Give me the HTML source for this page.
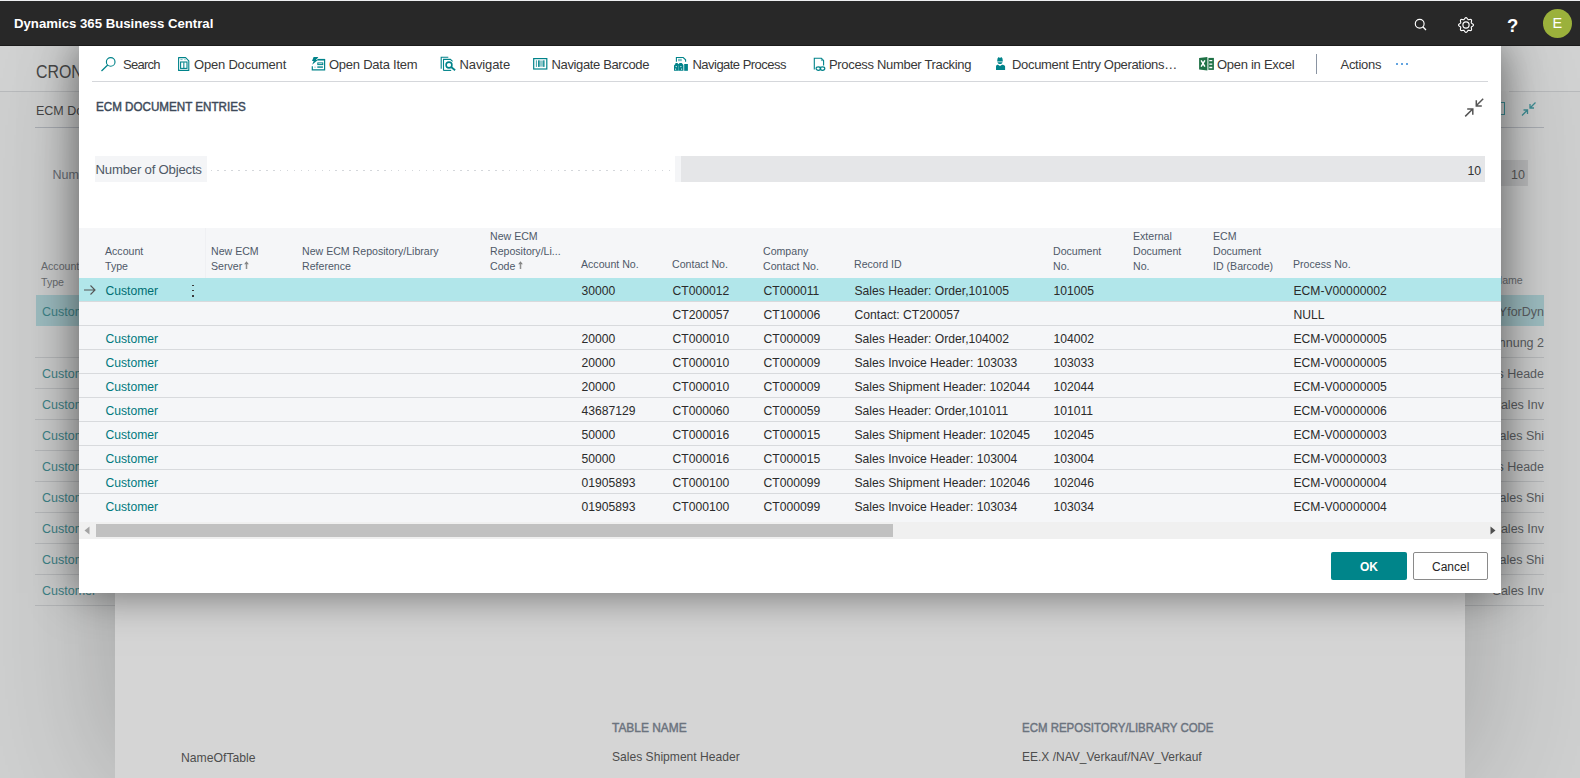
<!DOCTYPE html><html><head><meta charset="utf-8"><style>
*{margin:0;padding:0;box-sizing:border-box}
html,body{width:1580px;height:778px;overflow:hidden}
body{position:relative;background:#cfd0d0;font-family:"Liberation Sans",sans-serif}
.t{position:absolute;white-space:nowrap}
.abs{position:absolute}
</style></head><body>
<div class="abs" style="left:0;top:91px;width:80px;height:1px;background:#b9bbbd"></div>
<div class="abs" style="left:1509px;top:91px;width:71px;height:1px;background:#b9bbbd"></div>
<div class="abs" style="left:0;top:46px;width:1580px;height:45px;background:rgba(255,255,255,.07)"></div>
<div class="t" style="left:36px;top:58.95px;font-size:18.5px;line-height:25.27px;color:#484848;transform:scaleX(.86);transform-origin:0 0;">CRONUS</div>
<div class="t" style="left:36px;top:102.48px;font-size:12.5px;line-height:18.38px;color:#474747;">ECM Document Entries</div>
<div class="abs" style="left:35px;top:127px;width:1509px;height:1px;background:#a9adb3"></div>
<div class="t" style="left:52.5px;top:166.48px;font-size:12.5px;line-height:18.38px;color:#6a6f77;">Number of Objects</div>
<div class="abs" style="left:1400px;top:160px;width:128px;height:26px;background:#bdbebf"></div>
<div class="t" style="left:1511px;top:166.48px;font-size:12.5px;line-height:18.38px;color:#5a5a5a;">10</div>
<svg class="abs" style="left:1519px;top:100px" width="20" height="18" viewBox="0 0 20 18"><g stroke="#3f8f96" stroke-width="1.3" fill="none"><path d="M3 15.5 L8.5 10 M4.5 10 H8.5 V14"/><path d="M16.5 2.5 L11 8 M11 4 V8 H15"/></g></svg>
<div class="abs" style="left:1498px;top:102px;width:7px;height:13px;border:1.3px solid #3f8f96;border-left:none"></div>
<div class="t" style="left:41px;top:258.23px;font-size:10.6px;line-height:16.19px;color:#6b6e72;">Account</div>
<div class="t" style="left:41px;top:273.73px;font-size:10.6px;line-height:16.19px;color:#6b6e72;">Type</div>
<div class="t" style="left:1494.5px;top:272.23px;font-size:10.6px;line-height:16.19px;color:#6b6e72;">Name</div>
<div class="abs" style="left:36px;top:295px;width:60px;height:31px;background:#9fbfc3"></div>
<div class="abs" style="left:1460px;top:295px;width:84px;height:31px;background:#9fbfc3"></div>
<div class="t" style="left:42px;top:303.48px;font-size:12.5px;line-height:18.38px;color:#3e8489;">Customer</div>
<div class="abs" style="left:35px;top:357px;width:80px;height:1px;background:#b8babc"></div>
<div class="abs" style="left:1460px;top:357px;width:84px;height:1px;background:#b8babc"></div>
<div class="t" style="left:42px;top:365.48px;font-size:12.5px;line-height:18.38px;color:#3e8489;">Customer</div>
<div class="abs" style="left:35px;top:388px;width:80px;height:1px;background:#b8babc"></div>
<div class="abs" style="left:1460px;top:388px;width:84px;height:1px;background:#b8babc"></div>
<div class="t" style="left:42px;top:396.48px;font-size:12.5px;line-height:18.38px;color:#3e8489;">Customer</div>
<div class="abs" style="left:35px;top:419px;width:80px;height:1px;background:#b8babc"></div>
<div class="abs" style="left:1460px;top:419px;width:84px;height:1px;background:#b8babc"></div>
<div class="t" style="left:42px;top:427.48px;font-size:12.5px;line-height:18.38px;color:#3e8489;">Customer</div>
<div class="abs" style="left:35px;top:450px;width:80px;height:1px;background:#b8babc"></div>
<div class="abs" style="left:1460px;top:450px;width:84px;height:1px;background:#b8babc"></div>
<div class="t" style="left:42px;top:458.48px;font-size:12.5px;line-height:18.38px;color:#3e8489;">Customer</div>
<div class="abs" style="left:35px;top:481px;width:80px;height:1px;background:#b8babc"></div>
<div class="abs" style="left:1460px;top:481px;width:84px;height:1px;background:#b8babc"></div>
<div class="t" style="left:42px;top:489.48px;font-size:12.5px;line-height:18.38px;color:#3e8489;">Customer</div>
<div class="abs" style="left:35px;top:512px;width:80px;height:1px;background:#b8babc"></div>
<div class="abs" style="left:1460px;top:512px;width:84px;height:1px;background:#b8babc"></div>
<div class="t" style="left:42px;top:520.48px;font-size:12.5px;line-height:18.38px;color:#3e8489;">Customer</div>
<div class="abs" style="left:35px;top:543px;width:80px;height:1px;background:#b8babc"></div>
<div class="abs" style="left:1460px;top:543px;width:84px;height:1px;background:#b8babc"></div>
<div class="t" style="left:42px;top:551.48px;font-size:12.5px;line-height:18.38px;color:#3e8489;">Customer</div>
<div class="abs" style="left:35px;top:574px;width:80px;height:1px;background:#b8babc"></div>
<div class="abs" style="left:1460px;top:574px;width:84px;height:1px;background:#b8babc"></div>
<div class="t" style="left:42px;top:582.48px;font-size:12.5px;line-height:18.38px;color:#3e8489;">Customer</div>
<div class="abs" style="left:35px;top:605px;width:80px;height:1px;background:#b8babc"></div>
<div class="abs" style="left:1460px;top:605px;width:84px;height:1px;background:#b8babc"></div>
<div class="abs" style="left:35px;top:605px;width:80px;height:1px;background:#b8babc"></div>
<div class="abs" style="left:1460px;top:605px;width:84px;height:1px;background:#b8babc"></div>
<div class="abs" style="left:1440px;top:290px;width:104px;height:320px;overflow:hidden">
<div class="t" style="left:10px;top:13.48px;font-size:12.5px;line-height:18.38px;color:#5c5f63;right:0;left:auto;">CRONUSYforDyn</div>
<div class="t" style="left:12px;top:44.48px;font-size:12.5px;line-height:18.38px;color:#5c5f63;right:0;left:auto;">Rechnung 2</div>
<div class="t" style="left:12px;top:75.48px;font-size:12.5px;line-height:18.38px;color:#5c5f63;right:0;left:auto;">Sales Heade</div>
<div class="t" style="left:12px;top:106.48px;font-size:12.5px;line-height:18.38px;color:#5c5f63;right:0;left:auto;">Sales Inv</div>
<div class="t" style="left:12px;top:137.48px;font-size:12.5px;line-height:18.38px;color:#5c5f63;right:0;left:auto;">Sales Shi</div>
<div class="t" style="left:12px;top:168.48px;font-size:12.5px;line-height:18.38px;color:#5c5f63;right:0;left:auto;">Sales Heade</div>
<div class="t" style="left:12px;top:199.48px;font-size:12.5px;line-height:18.38px;color:#5c5f63;right:0;left:auto;">Sales Shi</div>
<div class="t" style="left:12px;top:230.48px;font-size:12.5px;line-height:18.38px;color:#5c5f63;right:0;left:auto;">Sales Inv</div>
<div class="t" style="left:12px;top:261.48px;font-size:12.5px;line-height:18.38px;color:#5c5f63;right:0;left:auto;">Sales Shi</div>
<div class="t" style="left:12px;top:292.48px;font-size:12.5px;line-height:18.38px;color:#5c5f63;right:0;left:auto;">Sales Inv</div>
</div>
<div class="abs" style="left:115px;top:46px;width:1350px;height:732px;background:#d5d5d5;box-shadow:0 0 130px rgba(0,0,0,.24)">
<div class="t" style="left:497px;top:672.67px;font-size:12.3px;line-height:18.14px;color:#6b737e;-webkit-text-stroke:0.45px #6b737e;transform:scaleX(.97);transform-origin:0 0;">TABLE NAME</div>
<div class="t" style="left:907px;top:672.67px;font-size:12.3px;line-height:18.14px;color:#6b737e;-webkit-text-stroke:0.45px #6b737e;transform:scaleX(.932);transform-origin:0 0;">ECM REPOSITORY/LIBRARY CODE</div>
<div class="t" style="left:66px;top:703.26px;font-size:12.2px;line-height:18.03px;color:#4d4d4d;">NameOfTable</div>
<div class="t" style="left:497px;top:703.35px;font-size:12.1px;line-height:17.91px;color:#4d4d4d;">Sales Shipment Header</div>
<div class="t" style="left:907px;top:703.44px;font-size:12px;line-height:17.8px;color:#4d4d4d;">EE.X /NAV_Verkauf/NAV_Verkauf</div>
</div>
<div class="abs" style="z-index:5;left:0;top:0;width:1580px;height:46px;background:#282828;border-top:1px solid #eeeff1;border-bottom:1px solid #1b1b1b"></div>
<div class="t" style="left:14px;top:13.54px;font-size:13.2px;line-height:19.18px;color:#ffffff;font-weight:700;z-index:6;">Dynamics 365 Business Central</div>
<svg class="abs" style="z-index:6;left:1412px;top:16px" width="18" height="18" viewBox="0 0 18 18"><circle cx="7.7" cy="7.7" r="4.4" stroke="#fff" stroke-width="1.15" fill="none"/><path d="M10.8 10.8 L14 14" stroke="#fff" stroke-width="1.3"/></svg>
<svg class="abs" style="z-index:6;left:1456px;top:15px" width="20" height="20" viewBox="0 0 20 20"><path d="M10.00 2.55 L10.48 2.68 L10.92 3.04 L11.29 3.53 L11.60 4.04 L11.88 4.45 L12.20 4.69 L12.59 4.74 L13.09 4.65 L13.67 4.51 L14.28 4.43 L14.84 4.48 L15.27 4.73 L15.52 5.16 L15.57 5.72 L15.49 6.33 L15.35 6.91 L15.26 7.41 L15.31 7.80 L15.55 8.12 L15.96 8.40 L16.47 8.71 L16.96 9.08 L17.32 9.52 L17.45 10.00 L17.32 10.48 L16.96 10.92 L16.47 11.29 L15.96 11.60 L15.55 11.88 L15.31 12.20 L15.26 12.59 L15.35 13.09 L15.49 13.67 L15.57 14.28 L15.52 14.84 L15.27 15.27 L14.84 15.52 L14.28 15.57 L13.67 15.49 L13.09 15.35 L12.59 15.26 L12.20 15.31 L11.88 15.55 L11.60 15.96 L11.29 16.47 L10.92 16.96 L10.48 17.32 L10.00 17.45 L9.52 17.32 L9.08 16.96 L8.71 16.47 L8.40 15.96 L8.12 15.55 L7.80 15.31 L7.41 15.26 L6.91 15.35 L6.33 15.49 L5.72 15.57 L5.16 15.52 L4.73 15.27 L4.48 14.84 L4.43 14.28 L4.51 13.67 L4.65 13.09 L4.74 12.59 L4.69 12.20 L4.45 11.88 L4.04 11.60 L3.53 11.29 L3.04 10.92 L2.68 10.48 L2.55 10.00 L2.68 9.52 L3.04 9.08 L3.53 8.71 L4.04 8.40 L4.45 8.12 L4.69 7.80 L4.74 7.41 L4.65 6.91 L4.51 6.33 L4.43 5.72 L4.48 5.16 L4.73 4.73 L5.16 4.48 L5.72 4.43 L6.33 4.51 L6.91 4.65 L7.41 4.74 L7.80 4.69 L8.12 4.45 L8.40 4.04 L8.71 3.53 L9.08 3.04 L9.52 2.68 L10.00 2.55Z" stroke="#fff" stroke-width="1.15" fill="none"/><circle cx="10" cy="10" r="3.1" stroke="#fff" stroke-width="1.15" fill="none"/></svg>
<div class="t" style="left:1507px;top:12.85px;font-size:18.5px;line-height:25.27px;color:#ffffff;font-weight:700;z-index:6;">?</div>
<div class="abs" style="z-index:6;left:1543px;top:9px;width:29px;height:29px;border-radius:50%;background:#9bb13b"></div>
<div class="t" style="left:1552.5px;top:13.24px;font-size:14.5px;line-height:20.67px;color:#ffffff;z-index:7;">E</div>
<div class="abs" style="left:79px;top:46px;width:1422px;height:547px;background:#fff;box-shadow:0 0 42px rgba(0,0,0,.52)"></div>
<div class="abs" style="left:92px;top:81px;width:1396px;height:1px;background:#d5d7db"></div>
<div class="t" style="left:123px;top:55.62px;font-size:13px;line-height:18.95px;color:#383838;letter-spacing:-0.72px;">Search</div>
<div class="t" style="left:194px;top:55.62px;font-size:13px;line-height:18.95px;color:#383838;letter-spacing:-0.2px;">Open Document</div>
<div class="t" style="left:329px;top:55.62px;font-size:13px;line-height:18.95px;color:#383838;letter-spacing:-0.24px;">Open Data Item</div>
<div class="t" style="left:459.5px;top:55.62px;font-size:13px;line-height:18.95px;color:#383838;letter-spacing:-0.1px;">Navigate</div>
<div class="t" style="left:551.5px;top:55.62px;font-size:13px;line-height:18.95px;color:#383838;letter-spacing:-0.36px;">Navigate Barcode</div>
<div class="t" style="left:692.5px;top:55.62px;font-size:13px;line-height:18.95px;color:#383838;letter-spacing:-0.53px;">Navigate Process</div>
<div class="t" style="left:829px;top:55.62px;font-size:13px;line-height:18.95px;color:#383838;letter-spacing:-0.32px;">Process Number Tracking</div>
<div class="t" style="left:1012px;top:55.62px;font-size:13px;line-height:18.95px;color:#383838;letter-spacing:-0.33px;">Document Entry Operations…</div>
<div class="t" style="left:1217px;top:55.62px;font-size:13px;line-height:18.95px;color:#383838;letter-spacing:-0.28px;">Open in Excel</div>
<div class="t" style="left:1340.5px;top:55.62px;font-size:13px;line-height:18.95px;color:#383838;letter-spacing:-0.29px;">Actions</div>
<svg class="abs" style="left:100px;top:56px" width="17" height="16" viewBox="0 0 17 16"><circle cx="10.7" cy="5.9" r="4.3" stroke="#00838a" stroke-width="1.15" fill="none"/><path d="M7.7 9 L1.5 15" stroke="#00838a" stroke-width="1.25"/></svg>
<svg class="abs" style="left:177px;top:56px" width="14" height="16" viewBox="0 0 14 16"><path d="M1.6 1.6 H8.6 L11.8 4.8 V14.4 H1.6 Z" stroke="#00838a" stroke-width="1.1" fill="none" stroke-linejoin="round"/><rect x="3.6" y="6" width="6.4" height="6.4" stroke="#00838a" stroke-width="1.1" fill="none"/><path d="M6.8 6.2 V12.2" stroke="#00838a" stroke-width="1.3" opacity=".8"/><path d="M3.4 3.6 H5.6 M7.4 3.6 H8.6" stroke="#00838a" stroke-width="1" opacity=".55"/></svg>
<svg class="abs" style="left:310px;top:56px" width="17" height="16" viewBox="0 0 17 16"><path d="M3.6 0.9 H8.4 L6 3.9 H7.9 L2.1 8.8 L3.7 4.9 H2 Z" fill="#00838a"/><path d="M7.6 3.6 H14.6 V13.8 H2.3 V10.2" stroke="#00838a" stroke-width="1.2" fill="none"/><rect x="7.5" y="2.9" width="7.4" height="1.5" fill="#00838a"/><rect x="7.8" y="6.9" width="5" height="1.7" stroke="#00838a" stroke-width="1" fill="none"/><rect x="7.3" y="10.2" width="5.6" height="1.8" fill="#00838a" opacity=".75"/><rect x="4.4" y="10.6" width="1.2" height="1.2" fill="#00838a" opacity=".45"/></svg>
<svg class="abs" style="left:440px;top:56px" width="17" height="16" viewBox="0 0 17 16"><path d="M1.2 12.8 V1.2 H8.3" stroke="#00838a" stroke-width="1.1" fill="none"/><path d="M3.5 14.4 V3.4 H10.4 L12.6 5.4" stroke="#00838a" stroke-width="1.1" fill="none"/><path d="M3.5 14.4 H11.2" stroke="#00838a" stroke-width="1.1"/><circle cx="9" cy="9" r="2.9" stroke="#00838a" stroke-width="1.6" fill="#fff"/><path d="M11.1 11.1 L15.1 14.2" stroke="#00838a" stroke-width="1.9"/></svg>
<svg class="abs" style="left:532px;top:56px" width="16" height="16" viewBox="0 0 16 16"><rect x="1.7" y="2.6" width="13.1" height="10.4" stroke="#00838a" stroke-width="1.2" fill="none"/><rect x="3.9" y="4.3" width="0.9" height="6.6" fill="#00838a" opacity=".85"/><rect x="6.1" y="4.3" width="1.5" height="6.6" fill="#00838a"/><rect x="7.6" y="4.5" width="3.6" height="6.2" fill="#00838a" opacity=".45"/><rect x="11.2" y="4.3" width="1.3" height="6.6" fill="#00838a"/></svg>
<svg class="abs" style="left:673px;top:56px" width="16" height="16" viewBox="0 0 16 16"><path d="M3.4 5.8 V1.5 H10.2 L12.6 3.8 V5.8" stroke="#00838a" stroke-width="1.1" fill="none"/><rect x="5" y="2.8" width="3.8" height="2.4" fill="#00838a" opacity=".5"/><path d="M1 14.8 V9.6 L2.4 8 V7.1 H4.4 L5.5 8.3 L6.6 7.1 H8.8 L10.4 9 V14.8 Z" fill="#00838a"/><rect x="11.2" y="8" width="3.7" height="6.8" fill="#00838a"/><circle cx="3.2" cy="10.6" r=".65" fill="#fff"/><circle cx="7.9" cy="10.6" r=".65" fill="#fff"/><circle cx="2.6" cy="13.1" r=".65" fill="#fff"/><circle cx="8.6" cy="13.1" r=".65" fill="#fff"/><path d="M5.7 9.5 V14.8" stroke="#fff" stroke-width=".5" opacity=".6"/></svg>
<svg class="abs" style="left:813px;top:56px" width="15" height="16" viewBox="0 0 15 16"><path d="M1.3 13.6 V2.2 H8.4 L10.6 4.4 V9.6" stroke="#00838a" stroke-width="1.1" fill="none"/><path d="M8.4 2.4 V4.6 H10.4" stroke="#00838a" stroke-width="1" fill="none" opacity=".6"/><ellipse cx="5.4" cy="12.6" rx="2.3" ry="1.7" stroke="#00838a" stroke-width="1.2" fill="none"/><ellipse cx="9.5" cy="12.6" rx="2.3" ry="1.7" stroke="#00838a" stroke-width="1.2" fill="none"/></svg>
<svg class="abs" style="left:995px;top:56px" width="12" height="15" viewBox="0 0 12 15"><path d="M2.2 5 L2.5 2.4 L3.7 0.9 L5 2 L6.3 0.9 L7.5 2.4 L7.8 5 Z" fill="#00838a"/><rect x="2.2" y="5" width="5.6" height="1.3" fill="#00838a" opacity=".5"/><path d="M2.6 6.3 H7.4 C7.2 7.6 6.1 8.1 5 8.1 C3.9 8.1 2.8 7.6 2.6 6.3 Z" fill="#00838a"/><path d="M1 10.4 C1 9.4 1.8 8.8 3 8.8 L5 9.9 L7 8.8 C8.2 8.8 10.1 9.4 10.1 10.4 V13.9 H1 Z" fill="#00838a"/></svg>
<svg class="abs" style="left:1198px;top:56px" width="16" height="15" viewBox="0 0 16 15"><path d="M1.1 2 L9.4 1.1 V14.5 L1.1 13.5 Z" fill="#1e7145"/><path d="M3.1 4.4 L6.9 10.6 M6.9 4.4 L3.1 10.6" stroke="#fff" stroke-width="1.5"/><rect x="10.4" y="1.9" width="5.5" height="12" fill="#1e7145"/><path d="M11.3 4.7 H14.3 M11.3 8.1 H14.3 M11.3 11.5 H14.3" stroke="#fff" stroke-width="1.3"/></svg>
<div class="abs" style="left:1316px;top:54px;width:1px;height:20px;background:#8a94a2"></div>
<div class="abs" style="left:1395.5px;top:62.5px;width:2.4px;height:2.4px;border-radius:50%;background:#2f86d6"></div>
<div class="abs" style="left:1400.5px;top:62.5px;width:2.4px;height:2.4px;border-radius:50%;background:#2f86d6"></div>
<div class="abs" style="left:1405.5px;top:62.5px;width:2.4px;height:2.4px;border-radius:50%;background:#2f86d6"></div>
<div class="t" style="left:95.5px;top:97.87px;font-size:12.3px;line-height:18.14px;color:#3d4a5a;-webkit-text-stroke:0.45px #3d4a5a;transform:scaleX(.946);transform-origin:0 0;">ECM DOCUMENT ENTRIES</div>
<svg class="abs" style="left:1462px;top:96px" width="24" height="24" viewBox="0 0 24 24"><g stroke="#555" stroke-width="1.5" fill="none"><path d="M21.2 2.7 L14.2 9.7 M14.3 4.2 V10 H19.8"/><path d="M3.2 20.4 L10.7 13 M5.2 13.1 H10.8 V18.7"/></g></svg>
<div class="abs" style="left:95px;top:156px;width:112px;height:26px;background:#f4f5f7"></div>
<div class="t" style="left:95.5px;top:160.34px;font-size:13.2px;line-height:19.18px;color:#4e5866;letter-spacing:-0.22px;">Number of Objects</div>
<div class="abs" style="left:210.5px;top:169.5px;width:1.5px;height:1.5px;background:#d4d7db"></div>
<div class="abs" style="left:217.4px;top:169.5px;width:1.5px;height:1.5px;background:#d4d7db"></div>
<div class="abs" style="left:224.4px;top:169.5px;width:1.5px;height:1.5px;background:#d4d7db"></div>
<div class="abs" style="left:231.3px;top:169.5px;width:1.5px;height:1.5px;background:#d4d7db"></div>
<div class="abs" style="left:238.3px;top:169.5px;width:1.5px;height:1.5px;background:#d4d7db"></div>
<div class="abs" style="left:245.2px;top:169.5px;width:1.5px;height:1.5px;background:#d4d7db"></div>
<div class="abs" style="left:252.1px;top:169.5px;width:1.5px;height:1.5px;background:#d4d7db"></div>
<div class="abs" style="left:259.1px;top:169.5px;width:1.5px;height:1.5px;background:#d4d7db"></div>
<div class="abs" style="left:266.0px;top:169.5px;width:1.5px;height:1.5px;background:#d4d7db"></div>
<div class="abs" style="left:273.0px;top:169.5px;width:1.5px;height:1.5px;background:#d4d7db"></div>
<div class="abs" style="left:279.9px;top:169.5px;width:1.5px;height:1.5px;background:#d4d7db"></div>
<div class="abs" style="left:286.8px;top:169.5px;width:1.5px;height:1.5px;background:#d4d7db"></div>
<div class="abs" style="left:293.8px;top:169.5px;width:1.5px;height:1.5px;background:#d4d7db"></div>
<div class="abs" style="left:300.7px;top:169.5px;width:1.5px;height:1.5px;background:#d4d7db"></div>
<div class="abs" style="left:307.7px;top:169.5px;width:1.5px;height:1.5px;background:#d4d7db"></div>
<div class="abs" style="left:314.6px;top:169.5px;width:1.5px;height:1.5px;background:#d4d7db"></div>
<div class="abs" style="left:321.5px;top:169.5px;width:1.5px;height:1.5px;background:#d4d7db"></div>
<div class="abs" style="left:328.5px;top:169.5px;width:1.5px;height:1.5px;background:#d4d7db"></div>
<div class="abs" style="left:335.4px;top:169.5px;width:1.5px;height:1.5px;background:#d4d7db"></div>
<div class="abs" style="left:342.4px;top:169.5px;width:1.5px;height:1.5px;background:#d4d7db"></div>
<div class="abs" style="left:349.3px;top:169.5px;width:1.5px;height:1.5px;background:#d4d7db"></div>
<div class="abs" style="left:356.2px;top:169.5px;width:1.5px;height:1.5px;background:#d4d7db"></div>
<div class="abs" style="left:363.2px;top:169.5px;width:1.5px;height:1.5px;background:#d4d7db"></div>
<div class="abs" style="left:370.1px;top:169.5px;width:1.5px;height:1.5px;background:#d4d7db"></div>
<div class="abs" style="left:377.1px;top:169.5px;width:1.5px;height:1.5px;background:#d4d7db"></div>
<div class="abs" style="left:384.0px;top:169.5px;width:1.5px;height:1.5px;background:#d4d7db"></div>
<div class="abs" style="left:390.9px;top:169.5px;width:1.5px;height:1.5px;background:#d4d7db"></div>
<div class="abs" style="left:397.9px;top:169.5px;width:1.5px;height:1.5px;background:#d4d7db"></div>
<div class="abs" style="left:404.8px;top:169.5px;width:1.5px;height:1.5px;background:#d4d7db"></div>
<div class="abs" style="left:411.8px;top:169.5px;width:1.5px;height:1.5px;background:#d4d7db"></div>
<div class="abs" style="left:418.7px;top:169.5px;width:1.5px;height:1.5px;background:#d4d7db"></div>
<div class="abs" style="left:425.6px;top:169.5px;width:1.5px;height:1.5px;background:#d4d7db"></div>
<div class="abs" style="left:432.6px;top:169.5px;width:1.5px;height:1.5px;background:#d4d7db"></div>
<div class="abs" style="left:439.5px;top:169.5px;width:1.5px;height:1.5px;background:#d4d7db"></div>
<div class="abs" style="left:446.5px;top:169.5px;width:1.5px;height:1.5px;background:#d4d7db"></div>
<div class="abs" style="left:453.4px;top:169.5px;width:1.5px;height:1.5px;background:#d4d7db"></div>
<div class="abs" style="left:460.3px;top:169.5px;width:1.5px;height:1.5px;background:#d4d7db"></div>
<div class="abs" style="left:467.3px;top:169.5px;width:1.5px;height:1.5px;background:#d4d7db"></div>
<div class="abs" style="left:474.2px;top:169.5px;width:1.5px;height:1.5px;background:#d4d7db"></div>
<div class="abs" style="left:481.2px;top:169.5px;width:1.5px;height:1.5px;background:#d4d7db"></div>
<div class="abs" style="left:488.1px;top:169.5px;width:1.5px;height:1.5px;background:#d4d7db"></div>
<div class="abs" style="left:495.0px;top:169.5px;width:1.5px;height:1.5px;background:#d4d7db"></div>
<div class="abs" style="left:502.0px;top:169.5px;width:1.5px;height:1.5px;background:#d4d7db"></div>
<div class="abs" style="left:508.9px;top:169.5px;width:1.5px;height:1.5px;background:#d4d7db"></div>
<div class="abs" style="left:515.9px;top:169.5px;width:1.5px;height:1.5px;background:#d4d7db"></div>
<div class="abs" style="left:522.8px;top:169.5px;width:1.5px;height:1.5px;background:#d4d7db"></div>
<div class="abs" style="left:529.7px;top:169.5px;width:1.5px;height:1.5px;background:#d4d7db"></div>
<div class="abs" style="left:536.7px;top:169.5px;width:1.5px;height:1.5px;background:#d4d7db"></div>
<div class="abs" style="left:543.6px;top:169.5px;width:1.5px;height:1.5px;background:#d4d7db"></div>
<div class="abs" style="left:550.6px;top:169.5px;width:1.5px;height:1.5px;background:#d4d7db"></div>
<div class="abs" style="left:557.5px;top:169.5px;width:1.5px;height:1.5px;background:#d4d7db"></div>
<div class="abs" style="left:564.4px;top:169.5px;width:1.5px;height:1.5px;background:#d4d7db"></div>
<div class="abs" style="left:571.4px;top:169.5px;width:1.5px;height:1.5px;background:#d4d7db"></div>
<div class="abs" style="left:578.3px;top:169.5px;width:1.5px;height:1.5px;background:#d4d7db"></div>
<div class="abs" style="left:585.3px;top:169.5px;width:1.5px;height:1.5px;background:#d4d7db"></div>
<div class="abs" style="left:592.2px;top:169.5px;width:1.5px;height:1.5px;background:#d4d7db"></div>
<div class="abs" style="left:599.1px;top:169.5px;width:1.5px;height:1.5px;background:#d4d7db"></div>
<div class="abs" style="left:606.1px;top:169.5px;width:1.5px;height:1.5px;background:#d4d7db"></div>
<div class="abs" style="left:613.0px;top:169.5px;width:1.5px;height:1.5px;background:#d4d7db"></div>
<div class="abs" style="left:620.0px;top:169.5px;width:1.5px;height:1.5px;background:#d4d7db"></div>
<div class="abs" style="left:626.9px;top:169.5px;width:1.5px;height:1.5px;background:#d4d7db"></div>
<div class="abs" style="left:633.8px;top:169.5px;width:1.5px;height:1.5px;background:#d4d7db"></div>
<div class="abs" style="left:640.8px;top:169.5px;width:1.5px;height:1.5px;background:#d4d7db"></div>
<div class="abs" style="left:647.7px;top:169.5px;width:1.5px;height:1.5px;background:#d4d7db"></div>
<div class="abs" style="left:654.7px;top:169.5px;width:1.5px;height:1.5px;background:#d4d7db"></div>
<div class="abs" style="left:661.6px;top:169.5px;width:1.5px;height:1.5px;background:#d4d7db"></div>
<div class="abs" style="left:668.5px;top:169.5px;width:1.5px;height:1.5px;background:#d4d7db"></div>
<div class="abs" style="left:675px;top:156px;width:810px;height:26px;background:#e5e6e8;border-left:6px solid #f4f5f7"></div>
<div class="t" style="left:1467.5px;top:162.17px;font-size:12.3px;line-height:18.14px;color:#333;">10</div>
<div class="abs" style="left:79px;top:228px;width:1422px;height:294px;background:#f5f6f8"></div>
<div class="abs" style="left:205px;top:228px;width:1px;height:50px;background:#eff0f3"></div>
<div class="abs" style="left:79px;top:278px;width:1422px;height:23px;background:#b1e6ea"></div>
<div class="abs" style="left:79px;top:301px;width:1422px;height:1px;background:#d8dadd"></div>
<div class="abs" style="left:79px;top:325px;width:1422px;height:1px;background:#d8dadd"></div>
<div class="abs" style="left:79px;top:349px;width:1422px;height:1px;background:#d8dadd"></div>
<div class="abs" style="left:79px;top:373px;width:1422px;height:1px;background:#d8dadd"></div>
<div class="abs" style="left:79px;top:397px;width:1422px;height:1px;background:#d8dadd"></div>
<div class="abs" style="left:79px;top:421px;width:1422px;height:1px;background:#d8dadd"></div>
<div class="abs" style="left:79px;top:445px;width:1422px;height:1px;background:#d8dadd"></div>
<div class="abs" style="left:79px;top:469px;width:1422px;height:1px;background:#d8dadd"></div>
<div class="abs" style="left:79px;top:493px;width:1422px;height:1px;background:#d8dadd"></div>
<div class="t" style="left:105px;top:243.23px;font-size:10.6px;line-height:16.19px;color:#4f5968;">Account</div>
<div class="t" style="left:105px;top:258.23px;font-size:10.6px;line-height:16.19px;color:#4f5968;">Type</div>
<div class="t" style="left:211px;top:243.23px;font-size:10.6px;line-height:16.19px;color:#4f5968;">New ECM</div>
<div class="t" style="left:211px;top:258.23px;font-size:10.6px;line-height:16.19px;color:#4f5968;">Server</div>
<div class="t" style="left:302px;top:243.23px;font-size:10.6px;line-height:16.19px;color:#4f5968;">New ECM Repository/Library</div>
<div class="t" style="left:302px;top:258.23px;font-size:10.6px;line-height:16.19px;color:#4f5968;">Reference</div>
<div class="t" style="left:490px;top:228.23px;font-size:10.6px;line-height:16.19px;color:#4f5968;">New ECM</div>
<div class="t" style="left:490px;top:243.23px;font-size:10.6px;line-height:16.19px;color:#4f5968;">Repository/Li...</div>
<div class="t" style="left:490px;top:258.23px;font-size:10.6px;line-height:16.19px;color:#4f5968;">Code</div>
<div class="t" style="left:581px;top:256.23px;font-size:10.6px;line-height:16.19px;color:#4f5968;">Account No.</div>
<div class="t" style="left:672px;top:256.23px;font-size:10.6px;line-height:16.19px;color:#4f5968;">Contact No.</div>
<div class="t" style="left:763px;top:243.23px;font-size:10.6px;line-height:16.19px;color:#4f5968;">Company</div>
<div class="t" style="left:763px;top:258.23px;font-size:10.6px;line-height:16.19px;color:#4f5968;">Contact No.</div>
<div class="t" style="left:854px;top:256.23px;font-size:10.6px;line-height:16.19px;color:#4f5968;">Record ID</div>
<div class="t" style="left:1053px;top:243.23px;font-size:10.6px;line-height:16.19px;color:#4f5968;">Document</div>
<div class="t" style="left:1053px;top:258.23px;font-size:10.6px;line-height:16.19px;color:#4f5968;">No.</div>
<div class="t" style="left:1133px;top:228.23px;font-size:10.6px;line-height:16.19px;color:#4f5968;">External</div>
<div class="t" style="left:1133px;top:243.23px;font-size:10.6px;line-height:16.19px;color:#4f5968;">Document</div>
<div class="t" style="left:1133px;top:258.23px;font-size:10.6px;line-height:16.19px;color:#4f5968;">No.</div>
<div class="t" style="left:1213px;top:228.23px;font-size:10.6px;line-height:16.19px;color:#4f5968;">ECM</div>
<div class="t" style="left:1213px;top:243.23px;font-size:10.6px;line-height:16.19px;color:#4f5968;">Document</div>
<div class="t" style="left:1213px;top:258.23px;font-size:10.6px;line-height:16.19px;color:#4f5968;">ID (Barcode)</div>
<div class="t" style="left:1293px;top:256.23px;font-size:10.6px;line-height:16.19px;color:#4f5968;">Process No.</div>
<svg class="abs" style="left:243.8px;top:261px" width="5" height="8" viewBox="0 0 5 8"><path d="M0.2 3.3 L2.5 0.3 L4.8 3.3 Z" fill="#808080"/><rect x="1.75" y="2.5" width="1.5" height="5.5" fill="#909090"/></svg>
<svg class="abs" style="left:517.8px;top:261px" width="5" height="8" viewBox="0 0 5 8"><path d="M0.2 3.3 L2.5 0.3 L4.8 3.3 Z" fill="#808080"/><rect x="1.75" y="2.5" width="1.5" height="5.5" fill="#909090"/></svg>
<div class="t" style="left:105.5px;top:282.81px;font-size:12.15px;line-height:17.97px;color:#006e72;">Customer</div>
<div class="t" style="left:581.5px;top:282.81px;font-size:12.15px;line-height:17.97px;color:#2b2b2b;">30000</div>
<div class="t" style="left:672.5px;top:282.81px;font-size:12.15px;line-height:17.97px;color:#2b2b2b;">CT000012</div>
<div class="t" style="left:763.5px;top:282.81px;font-size:12.15px;line-height:17.97px;color:#2b2b2b;">CT000011</div>
<div class="t" style="left:854.5px;top:282.81px;font-size:12.15px;line-height:17.97px;color:#2b2b2b;">Sales Header: Order,101005</div>
<div class="t" style="left:1053.5px;top:282.81px;font-size:12.15px;line-height:17.97px;color:#2b2b2b;">101005</div>
<div class="t" style="left:1293.5px;top:282.81px;font-size:12.15px;line-height:17.97px;color:#2b2b2b;">ECM-V00000002</div>
<div class="t" style="left:672.5px;top:306.81px;font-size:12.15px;line-height:17.97px;color:#2b2b2b;">CT200057</div>
<div class="t" style="left:763.5px;top:306.81px;font-size:12.15px;line-height:17.97px;color:#2b2b2b;">CT100006</div>
<div class="t" style="left:854.5px;top:306.81px;font-size:12.15px;line-height:17.97px;color:#2b2b2b;">Contact: CT200057</div>
<div class="t" style="left:1293.5px;top:306.81px;font-size:12.15px;line-height:17.97px;color:#2b2b2b;">NULL</div>
<div class="t" style="left:105.5px;top:330.81px;font-size:12.15px;line-height:17.97px;color:#00797d;">Customer</div>
<div class="t" style="left:581.5px;top:330.81px;font-size:12.15px;line-height:17.97px;color:#2b2b2b;">20000</div>
<div class="t" style="left:672.5px;top:330.81px;font-size:12.15px;line-height:17.97px;color:#2b2b2b;">CT000010</div>
<div class="t" style="left:763.5px;top:330.81px;font-size:12.15px;line-height:17.97px;color:#2b2b2b;">CT000009</div>
<div class="t" style="left:854.5px;top:330.81px;font-size:12.15px;line-height:17.97px;color:#2b2b2b;">Sales Header: Order,104002</div>
<div class="t" style="left:1053.5px;top:330.81px;font-size:12.15px;line-height:17.97px;color:#2b2b2b;">104002</div>
<div class="t" style="left:1293.5px;top:330.81px;font-size:12.15px;line-height:17.97px;color:#2b2b2b;">ECM-V00000005</div>
<div class="t" style="left:105.5px;top:354.81px;font-size:12.15px;line-height:17.97px;color:#00797d;">Customer</div>
<div class="t" style="left:581.5px;top:354.81px;font-size:12.15px;line-height:17.97px;color:#2b2b2b;">20000</div>
<div class="t" style="left:672.5px;top:354.81px;font-size:12.15px;line-height:17.97px;color:#2b2b2b;">CT000010</div>
<div class="t" style="left:763.5px;top:354.81px;font-size:12.15px;line-height:17.97px;color:#2b2b2b;">CT000009</div>
<div class="t" style="left:854.5px;top:354.81px;font-size:12.15px;line-height:17.97px;color:#2b2b2b;">Sales Invoice Header: 103033</div>
<div class="t" style="left:1053.5px;top:354.81px;font-size:12.15px;line-height:17.97px;color:#2b2b2b;">103033</div>
<div class="t" style="left:1293.5px;top:354.81px;font-size:12.15px;line-height:17.97px;color:#2b2b2b;">ECM-V00000005</div>
<div class="t" style="left:105.5px;top:378.81px;font-size:12.15px;line-height:17.97px;color:#00797d;">Customer</div>
<div class="t" style="left:581.5px;top:378.81px;font-size:12.15px;line-height:17.97px;color:#2b2b2b;">20000</div>
<div class="t" style="left:672.5px;top:378.81px;font-size:12.15px;line-height:17.97px;color:#2b2b2b;">CT000010</div>
<div class="t" style="left:763.5px;top:378.81px;font-size:12.15px;line-height:17.97px;color:#2b2b2b;">CT000009</div>
<div class="t" style="left:854.5px;top:378.81px;font-size:12.15px;line-height:17.97px;color:#2b2b2b;">Sales Shipment Header: 102044</div>
<div class="t" style="left:1053.5px;top:378.81px;font-size:12.15px;line-height:17.97px;color:#2b2b2b;">102044</div>
<div class="t" style="left:1293.5px;top:378.81px;font-size:12.15px;line-height:17.97px;color:#2b2b2b;">ECM-V00000005</div>
<div class="t" style="left:105.5px;top:402.81px;font-size:12.15px;line-height:17.97px;color:#00797d;">Customer</div>
<div class="t" style="left:581.5px;top:402.81px;font-size:12.15px;line-height:17.97px;color:#2b2b2b;">43687129</div>
<div class="t" style="left:672.5px;top:402.81px;font-size:12.15px;line-height:17.97px;color:#2b2b2b;">CT000060</div>
<div class="t" style="left:763.5px;top:402.81px;font-size:12.15px;line-height:17.97px;color:#2b2b2b;">CT000059</div>
<div class="t" style="left:854.5px;top:402.81px;font-size:12.15px;line-height:17.97px;color:#2b2b2b;">Sales Header: Order,101011</div>
<div class="t" style="left:1053.5px;top:402.81px;font-size:12.15px;line-height:17.97px;color:#2b2b2b;">101011</div>
<div class="t" style="left:1293.5px;top:402.81px;font-size:12.15px;line-height:17.97px;color:#2b2b2b;">ECM-V00000006</div>
<div class="t" style="left:105.5px;top:426.81px;font-size:12.15px;line-height:17.97px;color:#00797d;">Customer</div>
<div class="t" style="left:581.5px;top:426.81px;font-size:12.15px;line-height:17.97px;color:#2b2b2b;">50000</div>
<div class="t" style="left:672.5px;top:426.81px;font-size:12.15px;line-height:17.97px;color:#2b2b2b;">CT000016</div>
<div class="t" style="left:763.5px;top:426.81px;font-size:12.15px;line-height:17.97px;color:#2b2b2b;">CT000015</div>
<div class="t" style="left:854.5px;top:426.81px;font-size:12.15px;line-height:17.97px;color:#2b2b2b;">Sales Shipment Header: 102045</div>
<div class="t" style="left:1053.5px;top:426.81px;font-size:12.15px;line-height:17.97px;color:#2b2b2b;">102045</div>
<div class="t" style="left:1293.5px;top:426.81px;font-size:12.15px;line-height:17.97px;color:#2b2b2b;">ECM-V00000003</div>
<div class="t" style="left:105.5px;top:450.81px;font-size:12.15px;line-height:17.97px;color:#00797d;">Customer</div>
<div class="t" style="left:581.5px;top:450.81px;font-size:12.15px;line-height:17.97px;color:#2b2b2b;">50000</div>
<div class="t" style="left:672.5px;top:450.81px;font-size:12.15px;line-height:17.97px;color:#2b2b2b;">CT000016</div>
<div class="t" style="left:763.5px;top:450.81px;font-size:12.15px;line-height:17.97px;color:#2b2b2b;">CT000015</div>
<div class="t" style="left:854.5px;top:450.81px;font-size:12.15px;line-height:17.97px;color:#2b2b2b;">Sales Invoice Header: 103004</div>
<div class="t" style="left:1053.5px;top:450.81px;font-size:12.15px;line-height:17.97px;color:#2b2b2b;">103004</div>
<div class="t" style="left:1293.5px;top:450.81px;font-size:12.15px;line-height:17.97px;color:#2b2b2b;">ECM-V00000003</div>
<div class="t" style="left:105.5px;top:474.81px;font-size:12.15px;line-height:17.97px;color:#00797d;">Customer</div>
<div class="t" style="left:581.5px;top:474.81px;font-size:12.15px;line-height:17.97px;color:#2b2b2b;">01905893</div>
<div class="t" style="left:672.5px;top:474.81px;font-size:12.15px;line-height:17.97px;color:#2b2b2b;">CT000100</div>
<div class="t" style="left:763.5px;top:474.81px;font-size:12.15px;line-height:17.97px;color:#2b2b2b;">CT000099</div>
<div class="t" style="left:854.5px;top:474.81px;font-size:12.15px;line-height:17.97px;color:#2b2b2b;">Sales Shipment Header: 102046</div>
<div class="t" style="left:1053.5px;top:474.81px;font-size:12.15px;line-height:17.97px;color:#2b2b2b;">102046</div>
<div class="t" style="left:1293.5px;top:474.81px;font-size:12.15px;line-height:17.97px;color:#2b2b2b;">ECM-V00000004</div>
<div class="t" style="left:105.5px;top:498.81px;font-size:12.15px;line-height:17.97px;color:#00797d;">Customer</div>
<div class="t" style="left:581.5px;top:498.81px;font-size:12.15px;line-height:17.97px;color:#2b2b2b;">01905893</div>
<div class="t" style="left:672.5px;top:498.81px;font-size:12.15px;line-height:17.97px;color:#2b2b2b;">CT000100</div>
<div class="t" style="left:763.5px;top:498.81px;font-size:12.15px;line-height:17.97px;color:#2b2b2b;">CT000099</div>
<div class="t" style="left:854.5px;top:498.81px;font-size:12.15px;line-height:17.97px;color:#2b2b2b;">Sales Invoice Header: 103034</div>
<div class="t" style="left:1053.5px;top:498.81px;font-size:12.15px;line-height:17.97px;color:#2b2b2b;">103034</div>
<div class="t" style="left:1293.5px;top:498.81px;font-size:12.15px;line-height:17.97px;color:#2b2b2b;">ECM-V00000004</div>
<svg class="abs" style="left:83px;top:284px" width="14" height="12" viewBox="0 0 14 12"><path d="M1 6 H12 M7.5 1.5 L12 6 L7.5 10.5" stroke="#555" stroke-width="1.1" fill="none"/></svg>
<div class="abs" style="left:192.2px;top:284.5px;width:1.7px;height:1.7px;background:#3c3c3c"></div>
<div class="abs" style="left:192.2px;top:289.8px;width:1.7px;height:1.7px;background:#3c3c3c"></div>
<div class="abs" style="left:192.2px;top:295.2px;width:1.7px;height:1.7px;background:#3c3c3c"></div>
<div class="abs" style="left:79px;top:522px;width:1422px;height:17px;background:#f0f0f0"></div>
<div class="abs" style="left:96px;top:524px;width:797px;height:13px;background:#c1c1c1"></div>
<svg class="abs" style="left:84px;top:526px" width="6" height="9" viewBox="0 0 6 9"><path d="M5.5 0.5 V8.5 L0.5 4.5 Z" fill="#a3a3a3"/></svg>
<svg class="abs" style="left:1490px;top:526px" width="6" height="9" viewBox="0 0 6 9"><path d="M0.5 0.5 V8.5 L5.5 4.5 Z" fill="#505050"/></svg>
<div class="abs" style="left:1331px;top:552px;width:76px;height:28px;background:#00858a;border-radius:2px"></div>
<div class="t" style="left:1360px;top:558.94px;font-size:12px;line-height:17.8px;color:#fff;font-weight:700;">OK</div>
<div class="abs" style="left:1413px;top:552px;width:75px;height:28px;background:#fff;border:1px solid #8a8a8a;border-radius:2px"></div>
<div class="t" style="left:1432px;top:558.94px;font-size:12px;line-height:17.8px;color:#262626;">Cancel</div>
</body></html>
